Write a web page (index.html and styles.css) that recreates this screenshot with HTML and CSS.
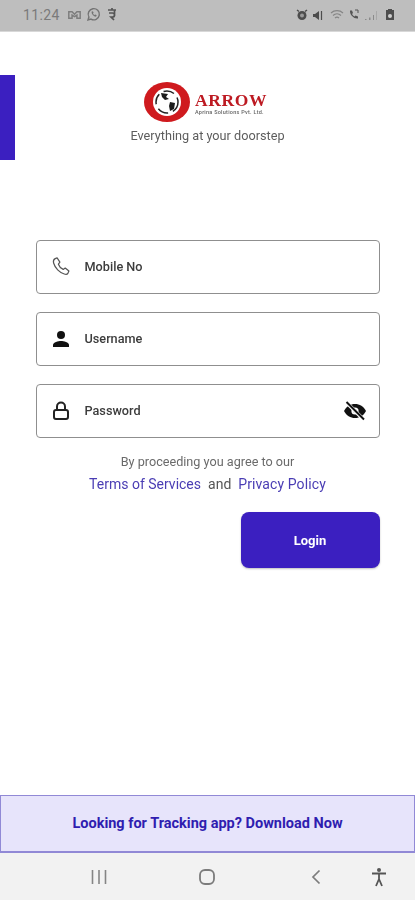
FILE: index.html
```html
<!DOCTYPE html>
<html lang="en">
<head>
<meta charset="utf-8">
<title>Arrow Login</title>
<link rel="stylesheet" href="styles.css">
</head>
<body>
<div class="screen">
  <header class="status">
    <div class="status-group">
      <span class="time">11:24</span>
      <svg class="si" width="13" height="10" viewBox="0 0 16 12"><path d="M1 2h4l3 3 3-3h4v8h-4V6L8 8 5 6v4H1z" fill="none" stroke="#7d7d7d" stroke-width="1.800"/></svg>
      <svg class="si" width="15" height="15" viewBox="0 0 15 15"><path d="M2 13l.9-3A5.6 5.6 0 1 1 5 12.100z" fill="none" stroke="#737373" stroke-width="1.400"/><path d="M5.500 4.800c0 2.500 2 4.700 4.500 4.900l.7-1.400-1.400-.8-.7.6c-.8-.4-1.300-1-1.600-1.700l.6-.7-.7-1.400z" fill="#737373"/></svg>
      <svg class="si si-g" width="10" height="15" viewBox="0 0 10 15"><path d="M1 3h8M5 1v2M2 6h3.500a2 2 0 0 1 0 4H4l3 3M7.500 3v6" fill="none" stroke="#555" stroke-width="1.700"/></svg>
    </div>
    <div class="status-group status-right">
      <svg width="12" height="12" viewBox="0 0 12 12"><circle cx="6" cy="6.500" r="4.500" fill="#4d4d4d"/><path d="M1 1l2 1.500M11 1L9 2.500" stroke="#4d4d4d" stroke-width="1.500"/><circle cx="6" cy="6.500" r="2" fill="#9a9a9a"/></svg>
      <svg width="12" height="12" viewBox="0 0 12 12"><path d="M1 5h2l4-3v9L3 8H1z" fill="#4d4d4d"/><path d="M9.500 2v9" stroke="#4d4d4d" stroke-width="1.200"/></svg>
      <svg class="wifi" width="14" height="12" viewBox="0 0 14 12"><path d="M1 4a9 9 0 0 1 12 0M3 6.500a6 6 0 0 1 8 0M5 9a3 3 0 0 1 4 0" fill="none" stroke="#858585" stroke-width="1.200"/></svg>
      <svg width="12" height="12" viewBox="0 0 12 12"><path d="M2 1.500l2 0 1 2.500-1 1c.6 1.200 1.400 2 2.500 2.500l1-1 2.500 1v2c-4 .5-8.500-3.500-8-8z" fill="#555"/><path d="M7 1h3v3" fill="none" stroke="#555" stroke-width="1"/></svg>
      <svg width="14" height="12" viewBox="0 0 14 12"><path d="M1 10h1.500v1H1zM5 8.500h1.500V11H5zM9 6h1V11H9z" fill="#8a8a8a"/><path d="M12 2h1v9h-1z" fill="#a8a8a8"/></svg>
      <svg class="batt" width="10" height="13" viewBox="0 0 10 13"><path d="M3 2V1h4v1h2v10H1V2z" fill="#4d4d4d"/><circle cx="5" cy="8" r="2" fill="#cfcfcf"/></svg>
    </div>
  </header>

  <main class="content">
    <div class="side-tab"></div>

    <div class="brand">
      <div class="logo">
        <svg class="logo-mark" width="46" height="40" viewBox="0 0 46 40">
          <ellipse cx="23" cy="20" rx="23" ry="20" fill="#cf1a1e"/>
          <circle cx="23" cy="20" r="14" fill="#fff"/>
          <circle cx="23" cy="20" r="11" fill="none" stroke="#222" stroke-width="1.500" stroke-dasharray="11 5"/>
          <path d="M17 11l7 1-2 3 3 2-4 1-3-3zM26 20l5 1-1 6-4 2-1-5z" fill="#1c1c1c"/>
        </svg>
        <div class="logo-text">
          <span class="logo-name">ARROW</span>
          <span class="logo-sub">Aprina Solutions Pvt. Ltd.</span>
        </div>
      </div>
      <p class="tagline">Everything at your doorstep</p>
    </div>

    <form class="form">
      <div class="field">
        <svg class="field-icon" width="24" height="24" viewBox="0 0 24 24"><path d="M6.200 3.600l1.900-.7 2.800 4.300-1.500 2c.8 2.300 2.600 4.200 4.800 5.200l2-1.400 3.700 3-.9 2.100c-.6 1.100-2 1.500-3.700.9C10.500 17.600 6 13 4.600 8c-.5-1.900.2-3.700 1.600-4.400z" fill="none" stroke="#555" stroke-width="1.200" stroke-linejoin="round"/></svg>
        <span class="field-label">Mobile No</span>
      </div>
      <div class="field">
        <svg class="field-icon" width="24" height="24" viewBox="0 0 24 24"><circle cx="12" cy="8" r="4" fill="#111"/><path d="M4 20v-2c0-2.700 5.300-4 8-4s8 1.300 8 4v2z" fill="#111"/></svg>
        <span class="field-label">Username</span>
      </div>
      <div class="field">
        <svg class="field-icon" width="24" height="24" viewBox="0 0 24 24"><path d="M8 11V7.500a4 4 0 0 1 8 0V11" fill="none" stroke="#222" stroke-width="2"/><rect x="5" y="11" width="14" height="9" rx="2" fill="none" stroke="#222" stroke-width="2"/></svg>
        <span class="field-label">Password</span>
        <svg class="eye" width="24" height="24" viewBox="0 0 24 24"><path d="M1 12c2.200-4.500 6.500-7 11-7s8.800 2.500 11 7c-2.200 4.500-6.500 7-11 7s-8.800-2.500-11-7z" fill="#111"/><circle cx="12" cy="12" r="3.600" fill="#fff"/><circle cx="12" cy="12" r="1.800" fill="#111"/><path d="M3.500 3.500l17 17" stroke="#fff" stroke-width="3.800"/><path d="M3.500 3l17.500 17.500" stroke="#111" stroke-width="1.900"/></svg>
      </div>
    </form>

    <div class="terms">
      <p class="terms-line">By proceeding you agree to our</p>
      <p class="terms-links"><a class="link">Terms of Services</a><span class="and">and</span><a class="link link-b">Privacy Policy</a></p>
    </div>

    <div class="actions"><button class="login" type="button">Login</button></div>
  </main>

  <div class="banner">Looking for Tracking app? Download Now</div>

  <nav class="navbar">
    <svg class="nav-recent" width="18" height="16" viewBox="0 0 18 16"><path d="M2.500 1v14M9 1v14M15.500 1v14" stroke="#858585" stroke-width="1.600"/></svg>
    <svg class="nav-home" width="18" height="18" viewBox="0 0 18 18"><rect x="2" y="2" width="14" height="14" rx="5" fill="none" stroke="#7c7c7c" stroke-width="1.800"/></svg>
    <svg class="nav-back" width="12" height="16" viewBox="0 0 12 16"><path d="M9.500 1.500L3 8l6.500 6.500" fill="none" stroke="#7c7c7c" stroke-width="1.700"/></svg>
    <svg class="nav-access" width="18" height="20" viewBox="0 0 18 20"><circle cx="9" cy="3" r="2" fill="#555"/><path d="M2 6.500h14M9 7v5M9 12l-3 7M9 12l3 7" fill="none" stroke="#555" stroke-width="1.800"/></svg>
  </nav>
</div>
</body>
</html>
```

FILE: styles.css
```css
* { box-sizing: border-box; }
html, body { margin: 0; padding: 0; }
body { background: #fff; font-family: Roboto, "Liberation Sans", sans-serif; }

.screen {
  width: 415px;
  height: 900px;
  display: flex;
  flex-direction: column;
  overflow: hidden;
  filter: blur(.45px);
}

.status {
  height: 32px;
  flex: none;
  background: #bebebe;
  border-bottom: 1px solid #d8d8d8;
  display: flex;
  align-items: center;
  justify-content: space-between;
  padding: 0 20px 2px 23px;
}
.status-group { display: flex; align-items: center; gap: 5px; }
.status-right { gap: 4px; }
.time { font-size: 14px; color: #7a7a7a; letter-spacing: .35px; margin-right: 3px; }
.si-g { margin-left: 1px; }
.wifi { margin-left: 2px; }
.batt { margin-left: 3px; }

.content {
  position: relative;
  flex: 1;
  display: flex;
  flex-direction: column;
  align-items: center;
  padding-top: 50px;
}
.side-tab {
  position: absolute;
  left: 0;
  top: 43px;
  width: 15px;
  height: 85px;
  background: #3b1fc0;
}

.brand { display: flex; flex-direction: column; align-items: center; }
.logo { display: flex; align-items: center; gap: 5px; height: 40px; margin-left: -4px; }
.logo-text { display: flex; flex-direction: column; padding-top: 3px; }
.logo-name {
  font-family: "Liberation Serif", serif;
  font-weight: 700;
  font-size: 17.500px;
  line-height: 17px;
  letter-spacing: .6px;
  color: #bd1a22;
}
.logo-sub {
  font-size: 5.500px;
  line-height: 6px;
  letter-spacing: .25px;
  font-weight: 500;
  color: #666;
  white-space: nowrap;
}
.tagline { margin: 0; margin-top: 5px; font-size: 12.700px; line-height: 18px; color: #5d5d5d; }

.form {
  width: 344px;
  margin-top: 95px;
  display: flex;
  flex-direction: column;
  gap: 18px;
}
.field {
  height: 54px;
  border: 1px solid #8f8f8f;
  border-radius: 4px;
  background: #fff;
  display: flex;
  align-items: center;
  padding: 0 12px;
}
.field-icon { flex: none; }
.field-label {
  margin-left: 12px;
  padding-bottom: 2px;
  flex: 1;
  font-size: 12.700px;
  font-weight: 500;
  color: #3c3c3c;
}
.eye { flex: none; }

.terms { margin-top: 14px; text-align: center; width: 344px; }
.terms-line { margin: 0; font-size: 12.650px; line-height: 20px; color: #6a6a6a; }
.terms-links {
  margin: 2px 0 0;
  font-size: 14px;
  line-height: 20px;
  display: flex;
  justify-content: center;
  gap: 7px;
}
.link { color: #4a3db4; }
.link-b { letter-spacing: .1px; }
.and { color: #555; }

.actions { width: 344px; display: flex; justify-content: flex-end; margin-top: 18px; }
.login {
  width: 139px;
  height: 56px;
  border: 0;
  border-radius: 8px;
  background: #3b1fc0;
  color: #fff;
  font-family: inherit;
  font-size: 13px;
  font-weight: 700;
  box-shadow: 0 1px 2px rgba(0,0,0,.25);
}

.banner {
  height: 58px;
  flex: none;
  background: #e7e4fb;
  border: 1px solid #9189d6;
  border-width: 1px 1px 2px;
  color: #2f1db0;
  font-size: 14.500px;
  font-weight: 700;
  display: flex;
  align-items: center;
  justify-content: center;
}

.navbar {
  height: 47px;
  flex: none;
  background: #f2f2f2;
  display: flex;
  align-items: center;
  padding-left: 90px;
}
.nav-home { margin-left: 90px; }
.nav-back { margin-left: 94px; }
.nav-access { margin-left: 48px; }
```
